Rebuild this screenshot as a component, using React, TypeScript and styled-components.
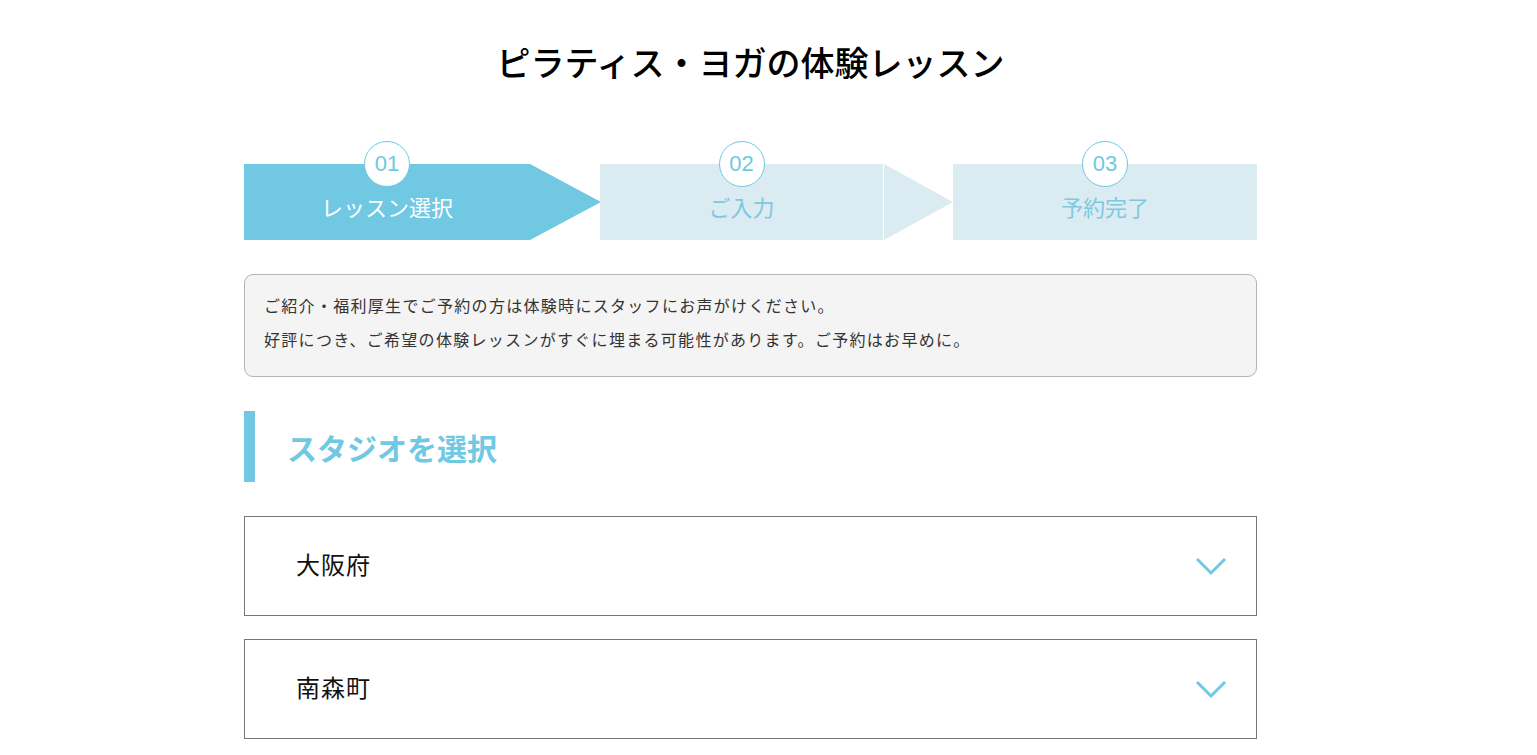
import styled, { createGlobalStyle } from "styled-components";

const GlobalStyle = createGlobalStyle`
  body {
    margin: 0;
    background: #fff;
    font-family: "Noto Sans CJK JP", "Noto Sans", sans-serif;
  }
`;

const BLUE = "#70c8e2";
const PALE = "#daebf2";

const steps = [
  { num: "01", label: "レッスン選択", width: "286px" },
  { num: "02", label: "ご入力", width: "283px" },
  { num: "03", label: "予約完了", width: "304px" },
];

const regions = ["大阪府", "南森町"];

function App() {
  return (
    <>
      <GlobalStyle />
      <Page>
        <Title>ピラティス・ヨガの体験レッスン</Title>
        <StepBar>
          {steps.map((s, i) => (
            <Step
              key={s.num}
              $active={i === 0}
              $width={s.width}
              $arrow={i < steps.length - 1}
              $gap={i === 1}
            >
              <StepNum>{s.num}</StepNum>
              <StepLabel $active={i === 0}>{s.label}</StepLabel>
            </Step>
          ))}
        </StepBar>
        <Notice>
          <p>ご紹介・福利厚生でご予約の方は体験時にスタッフにお声がけください。</p>
          <p>好評につき、ご希望の体験レッスンがすぐに埋まる可能性があります。ご予約はお早めに。</p>
        </Notice>
        <SectionHeading>スタジオを選択</SectionHeading>
        <SelectList>
          {regions.map((r) => (
            <SelectBox key={r}>
              <span>{r}</span>
              <svg width="32" height="20" viewBox="0 0 32 20">
                <polyline
                  points="2,3 16,17 30,3"
                  fill="none"
                  stroke={BLUE}
                  strokeWidth="3"
                />
              </svg>
            </SelectBox>
          ))}
        </SelectList>
      </Page>
    </>
  );
}

const Page = styled.div`
  width: 1013px;
  margin-left: 244px;
  display: flex;
  flex-direction: column;
`;

const Title = styled.h1`
  margin: 40px 0 0;
  text-align: center;
  font-size: 34px;
  font-weight: 500;
  line-height: 44px;
  color: #000;
`;

const StepBar = styled.div`
  margin-top: 80px;
  display: flex;
  gap: 70px;
`;

const Step = styled.div<{
  $active: boolean;
  $width: string;
  $arrow: boolean;
  $gap: boolean;
}>`
  position: relative;
  width: ${(p) => p.$width};
  height: 76px;
  background: ${(p) => (p.$active ? BLUE : PALE)};
  display: flex;
  justify-content: center;
  align-items: center;

  &::after {
    content: "";
    display: ${(p) => (p.$arrow ? "block" : "none")};
    position: absolute;
    top: 0;
    left: ${(p) => (p.$gap ? "calc(100% + 1px)" : "100%")};
    width: 0;
    height: 0;
    border-top: 38px solid transparent;
    border-bottom: 38px solid transparent;
    border-left: ${(p) => (p.$gap ? "69px" : "71px")} solid
      ${(p) => (p.$active ? BLUE : PALE)};
  }
`;

const StepNum = styled.div`
  position: absolute;
  top: -23px;
  left: 50%;
  transform: translateX(-50%);
  width: 44px;
  height: 44px;
  border-radius: 50%;
  border: 1px solid ${BLUE};
  background: #fff;
  color: ${BLUE};
  font-family: "Liberation Sans", Arial, sans-serif;
  font-size: 22px;
  display: flex;
  align-items: center;
  justify-content: center;
`;

const StepLabel = styled.div<{ $active: boolean }>`
  margin-top: 8px;
  font-size: 22px;
  color: ${(p) => (p.$active ? "#fff" : "#7ec8e0")};
`;

const Notice = styled.div`
  margin-top: 34px;
  padding: 13px 19px 20px;
  background: #f4f4f4;
  border: 1px solid #b5b5b5;
  border-radius: 9px;

  p {
    margin: 0;
    font-size: 16px;
    font-weight: 400;
    letter-spacing: 1.3px;
    line-height: 34px;
    color: #333;
  }
`;

const SectionHeading = styled.h2`
  margin: 34px 0 0;
  height: 71px;
  border-left: 11px solid ${BLUE};
  padding-left: 32px;
  display: flex;
  align-items: center;
  font-size: 30px;
  font-weight: 700;
  color: ${BLUE};
`;

const SelectList = styled.div`
  margin-top: 34px;
  display: flex;
  flex-direction: column;
  gap: 23px;
`;

const SelectBox = styled.div`
  box-sizing: border-box;
  height: 100px;
  border: 1px solid #777;
  padding: 0 29px 0 51px;
  display: flex;
  align-items: center;
  justify-content: space-between;
  font-size: 24px;
  letter-spacing: 1px;
  color: #111;

  span {
    margin-bottom: 6px;
  }
`;

export default App;
